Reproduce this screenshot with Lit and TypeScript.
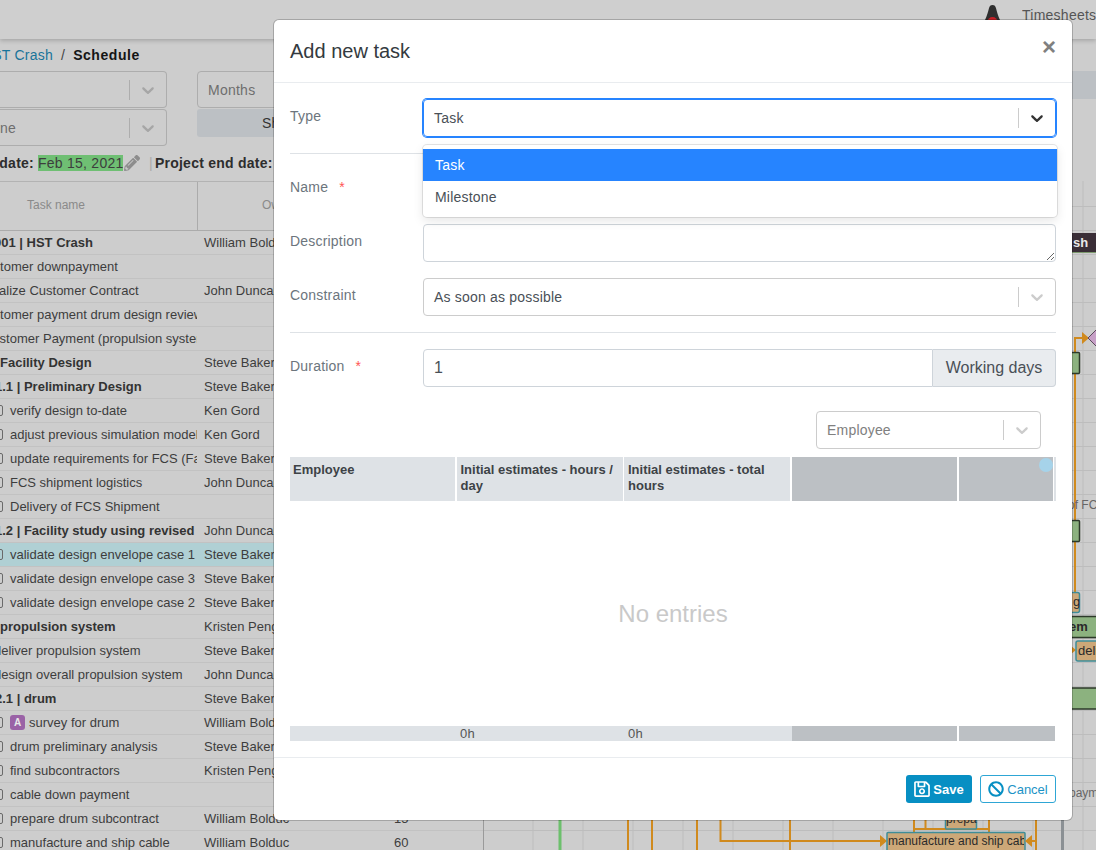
import { LitElement, html, svg, css } from "lit";
import { customElement } from "lit/decorators.js";

interface TaskRow {
  name: string;
  owner?: string;
  x?: number; // left offset of the text, the list is scrolled sideways
  bold?: boolean;
  icon?: boolean;
  badge?: boolean;
  hl?: boolean;
  dur?: string;
}

const ROWS: TaskRow[] = [
  { name: "001 | HST Crash", owner: "William Bolduc", x: -6, bold: true },
  { name: "Customer downpayment", x: -23 },
  { name: "Finalize Customer Contract", owner: "John Duncan", x: -19 },
  { name: "Customer payment drum design review", x: -23 },
  { name: "Customer Payment (propulsion system)", x: -17 },
  { name: "Facility Design", owner: "Steve Baker", x: 0, bold: true },
  { name: "1.1 | Preliminary Design", owner: "Steve Baker", x: -5, bold: true },
  { name: "verify design to-date", owner: "Ken Gord", icon: true },
  { name: "adjust previous simulation model", owner: "Ken Gord", icon: true },
  { name: "update requirements for FCS (Facility)", owner: "Steve Baker", icon: true },
  { name: "FCS shipment logistics", owner: "John Duncan", icon: true },
  { name: "Delivery of FCS Shipment", icon: true },
  { name: "1.2 | Facility study using revised", owner: "John Duncan", x: -5, bold: true },
  { name: "validate design envelope case 1", owner: "Steve Baker", icon: true, hl: true },
  { name: "validate design envelope case 3", owner: "Steve Baker", icon: true },
  { name: "validate design envelope case 2", owner: "Steve Baker", icon: true },
  { name: "propulsion system", owner: "Kristen Peng", x: 0, bold: true },
  { name: "deliver propulsion system", owner: "Steve Baker", x: -6 },
  { name: "design overall propulsion system", owner: "John Duncan", x: -6 },
  { name: "2.1 | drum", owner: "Steve Baker", x: -5, bold: true },
  { name: "survey for drum", owner: "William Bolduc", icon: true, badge: true },
  { name: "drum preliminary analysis", owner: "Steve Baker", icon: true },
  { name: "find subcontractors", owner: "Kristen Peng", icon: true },
  { name: "cable down payment", icon: true },
  { name: "prepare drum subcontract", owner: "William Bolduc", icon: true, dur: "15" },
  { name: "manufacture and ship cable", owner: "William Bolduc", icon: true, dur: "60" },
];

const CHEVRON =
  "M4.516 7.548c0.436-0.446 1.043-0.481 1.576 0l3.908 3.747 3.908-3.747c0.533-0.481 1.141-0.446 1.574 0 0.436 0.445 0.408 1.197 0 1.615-0.406 0.418-4.695 4.502-4.695 4.502-0.217 0.223-0.502 0.335-0.787 0.335s-0.57-0.112-0.789-0.335c0 0-4.287-4.084-4.695-4.502s-0.436-1.17 0-1.615z";
const PENCIL =
  "M497.9 142.1l-46.1 46.1c-4.7 4.7-12.3 4.7-17 0l-111-111c-4.7-4.7-4.7-12.3 0-17l46.1-46.1c18.7-18.7 49.1-18.7 67.9 0l60.1 60.1c18.8 18.7 18.8 49.1 0 67.9zM284.2 99.8L21.6 362.4.4 483.9c-2.9 16.4 11.4 30.6 27.8 27.8l121.5-21.3 262.6-262.6c4.7-4.7 4.7-12.3 0-17l-111-111c-4.8-4.7-12.4-4.7-17.1 0zM124.1 339.9c-5.5-5.5-5.5-14.3 0-19.8l154-154c5.5-5.5 14.3-5.5 19.8 0s5.5 14.3 0 19.8l-154 154c-5.5 5.5-14.3 5.5-19.8 0zM88 424h48v36.3l-64.5 11.3-31.1-31.1L51.7 376H88v48z";
const SAVE =
  "M433.941 129.941l-83.882-83.882A48 48 0 0 0 316.118 32H48C21.49 32 0 53.49 0 80v352c0 26.51 21.49 48 48 48h352c26.51 0 48-21.49 48-48V163.882a48 48 0 0 0-14.059-33.941zM272 80v80H144V80h128zm122 352H54a6 6 0 0 1-6-6V86a6 6 0 0 1 6-6h42v104c0 13.255 10.745 24 24 24h176c13.255 0 24-10.745 24-24V83.882l78.243 78.243a6 6 0 0 1 1.757 4.243V426a6 6 0 0 1-6 6zM224 232c-48.523 0-88 39.477-88 88s39.477 88 88 88 88-39.477 88-88-39.477-88-88-88zm0 128c-22.056 0-40-17.944-40-40s17.944-40 40-40 40 17.944 40 40-17.944 40-40 40z";
const BAN =
  "M256 8C119.034 8 8 119.033 8 256s111.034 248 248 248 248-111.034 248-248S392.967 8 256 8zm130.108 117.892c65.448 65.448 70 165.481 20.677 235.637L150.47 105.216c70.204-49.356 170.226-44.735 235.638 20.676zM125.892 386.108c-65.448-65.448-70-165.481-20.677-235.637L361.53 406.784c-70.203 49.356-170.226 44.736-235.638-20.676z";

function ganttLines() {
  const out = [];
  for (let x = 533; x < 1096; x += 50) {
    out.push(svg`<line class="grid" x1=${x} y1="181" x2=${x} y2="850" />`);
  }
  for (let y = 206; y < 850; y += 24) {
    out.push(svg`<line class="grid" x1="483" y1=${y + 0.5} x2="1096" y2=${y + 0.5} />`);
  }
  return out;
}

@customElement("app-root")
export class AppRoot extends LitElement {
  static styles = css`
    :host {
      display: block;
      font-family: "Liberation Sans", Arial, sans-serif;
      font-size: 14px;
      letter-spacing: 0.25px;
    }
    .page {
      position: relative;
      width: 1096px;
      height: 850px;
      overflow: hidden;
      background: #cdcdcd;
      color: #3d3d3d;
    }
    svg {
      display: block;
    }

    /* page behind the dialog */
    .topbar {
      height: 39px;
      display: flex;
      align-items: flex-start;
      justify-content: flex-end;
      background: #cfcfcf;
      box-shadow: 0 2px 4px rgba(0, 0, 0, 0.18);
    }
    .bell {
      margin: 5px 22px 0 0;
    }
    .timesheets {
      width: 74px;
      overflow: hidden;
      white-space: nowrap;
      line-height: 30px;
      color: #555;
    }
    .crumb {
      display: flex;
      height: 32px;
      align-items: center;
    }
    .clip-left {
      display: flex;
      justify-content: flex-end;
      overflow: hidden;
      white-space: nowrap;
      flex: none;
    }
    .crumb .clip-left {
      width: 53px;
      color: #19749a;
    }
    .crumb .sep {
      margin: 0 8px;
      color: #444;
    }
    .crumb b {
      color: #151515;
      letter-spacing: 0.55px;
    }
    .filters {
      display: flex;
      height: 76px;
      margin-bottom: 8px;
    }
    .f-col {
      width: 167px;
      flex: none;
    }
    .f-col.mid {
      width: 166px;
      margin-left: 30px;
    }
    .f-far {
      width: 100px;
      height: 28px;
      margin-left: auto;
      background: #bcc0c4;
    }
    .sel-bg {
      display: flex;
      align-items: center;
      justify-content: space-between;
      height: 37px;
      margin-bottom: 1px;
      box-sizing: border-box;
      border: 1px solid #adadad;
      border-radius: 4px;
      padding-left: 10px;
      color: #6e6e6e;
    }
    .f-col:first-child .sel-bg {
      border-left: 0;
      border-radius: 0 4px 4px 0;
      padding-left: 0;
    }
    .show-btn {
      height: 28px;
      background: #bcc0c4;
      border-radius: 3px;
      line-height: 28px;
      text-align: center;
      color: #333;
    }
    .ind {
      display: flex;
      align-items: center;
      flex: none;
      width: 37px;
      height: 20px;
      border-left: 1px solid #adadad;
      box-sizing: border-box;
      justify-content: center;
    }
    .ind svg {
      fill: #a6a6a6;
    }
    .dateline {
      display: flex;
      align-items: center;
      height: 16px;
      margin-bottom: 10px;
      white-space: nowrap;
      font-weight: 700;
      color: #2d2d2d;
    }
    .dateline .clip-left {
      width: 34px;
      margin-right: 4px;
    }
    .hl-date {
      width: 85px;
      height: 16px;
      line-height: 16px;
      overflow: hidden;
      background: #6fbf73;
      font-weight: 400;
      color: #3d3d3d;
    }
    .dateline svg {
      margin: 0 9px 0 1px;
      fill: #8d8d8d;
    }
    .dateline .bar {
      font-weight: 400;
      color: #aaa;
      margin-right: 2px;
    }

    .main {
      display: flex;
    }
    .table {
      width: 483px;
      flex: none;
      border-top: 1px solid #b3b3b3;
      box-sizing: border-box;
      font-size: 13px;
      letter-spacing: 0;
    }
    .thead {
      display: flex;
      height: 48px;
      border-bottom: 1px solid #ababab;
      box-sizing: content-box;
      font-size: 12px;
      color: #8a8a8a;
      line-height: 47px;
    }
    .th-task {
      width: 170px;
      padding-left: 27px;
      border-right: 1px solid #ababab;
      flex: none;
    }
    .th-owner {
      padding-left: 64px;
    }
    .row {
      display: flex;
      align-items: center;
      height: 24px;
      box-sizing: border-box;
      border-bottom: 1px solid #c2c2c2;
      white-space: nowrap;
    }
    .row.hl {
      background: #b0d0d4;
    }
    .row.bold .task {
      font-weight: 700;
      color: #333;
    }
    .task {
      display: flex;
      align-items: center;
      width: 197px;
      flex: none;
      overflow: hidden;
    }
    .t-icon {
      flex: none;
      width: 7px;
      height: 11px;
      margin: 0 7px 0 -4px;
      border: 1px solid #6a6a6a;
      border-radius: 2px;
      box-sizing: border-box;
    }
    .badge {
      flex: none;
      width: 15px;
      height: 15px;
      margin-right: 4px;
      border-radius: 3px;
      background: #9a62a6;
      color: #e8e8e8;
      font-size: 10px;
      font-weight: 700;
      line-height: 15px;
      text-align: center;
    }
    .owner {
      width: 190px;
      flex: none;
      padding-left: 7px;
      box-sizing: border-box;
    }
    .dur {
      padding-left: 7px;
    }
    .gantt {
      flex: none;
      width: 613px;
      height: 669px;
    }
    .grid {
      stroke: #bdbdbd;
      stroke-width: 1;
    }
    .dep {
      stroke: #d08a1e;
      stroke-width: 2;
      fill: none;
    }
    .arrow {
      fill: #d08a1e;
    }
    .g-text {
      font-size: 13px;
      letter-spacing: 0;
      fill: #2a2a2a;
    }
    .g-small {
      font-size: 12px;
      letter-spacing: 0;
      fill: #2a2a2a;
    }
    .g-soft {
      font-size: 12px;
      letter-spacing: 0;
      fill: #666;
    }
    .g-white {
      font-size: 13px;
      font-weight: 700;
      letter-spacing: 0;
      fill: #e8e8e8;
    }
    .b-green {
      fill: #8cb27f;
      stroke: #2d3a2a;
      stroke-width: 1.5;
    }
    .b-tan {
      fill: #cda878;
      stroke: #3f8d98;
      stroke-width: 1.5;
    }

    /* dialog */
    .modal {
      position: absolute;
      left: 274px;
      top: 20px;
      width: 798px;
      height: 800px;
      display: flex;
      flex-direction: column;
      background: #fff;
      border-radius: 5px;
      box-shadow: 0 0 0 1px rgba(0, 0, 0, 0.2);
      color: #495057;
      letter-spacing: 0.2px;
    }
    .m-head {
      display: flex;
      align-items: center;
      justify-content: space-between;
      height: 62px;
      flex: none;
      padding: 0 16px;
      border-bottom: 1px solid #e9ecef;
      box-sizing: content-box;
    }
    .m-title {
      font-size: 20px;
      color: #343a40;
      letter-spacing: 0;
    }
    .m-close {
      font-size: 24px;
      font-weight: 700;
      line-height: 1;
      color: #808080;
      margin: -8px 0 0 0;
      letter-spacing: 0;
    }
    .m-body {
      flex: 1;
      display: flex;
      flex-direction: column;
      padding: 16px;
    }
    .f-row {
      position: relative;
      display: flex;
      margin-bottom: 16px;
    }
    .f-label {
      width: 133px;
      flex: none;
      padding-top: 7px;
      line-height: 21px;
      color: #6c757d;
    }
    .req {
      margin-left: 7px;
      color: #f55;
    }
    .f-ctl {
      flex: 1;
      min-width: 0;
      display: flex;
    }
    hr {
      width: 100%;
      height: 1px;
      margin: 0 0 16px;
      border: 0;
      background: #dee2e6;
    }
    .input {
      flex: 1;
      min-width: 0;
      height: 38px;
      box-sizing: border-box;
      border: 1px solid #ced4da;
      border-radius: 4px;
      padding: 6px 10px;
      font: 16px "Liberation Sans", Arial, sans-serif;
      color: #495057;
      background: #fff;
      outline: none;
      resize: vertical;
    }
    .input.join {
      border-radius: 4px 0 0 4px;
    }
    .addon {
      flex: none;
      width: 123px;
      height: 38px;
      box-sizing: border-box;
      border: 1px solid #ced4da;
      border-left: 0;
      border-radius: 0 4px 4px 0;
      background: #e9ecef;
      font-size: 16px;
      line-height: 36px;
      text-align: center;
      letter-spacing: 0;
    }
    .select {
      flex: 1;
      min-width: 0;
      display: flex;
      align-items: center;
      height: 38px;
      box-sizing: border-box;
      border: 1px solid #cccccc;
      border-radius: 4px;
      padding-left: 10px;
      color: #495057;
    }
    .select .val {
      flex: 1;
    }
    .select .ind {
      border-left-color: #cccccc;
      width: 37px;
    }
    .select .ind svg {
      fill: #cccccc;
    }
    .select.focus {
      border-color: #2684ff;
      box-shadow: 0 0 0 1px #2684ff;
    }
    .select.focus .ind svg {
      fill: #333;
    }
    .select.ph .val {
      color: #808080;
    }
    .menu {
      position: absolute;
      left: 133px;
      right: -1px;
      top: 46px;
      z-index: 2;
      padding: 4px 0;
      background: #fff;
      border-radius: 4px;
      box-shadow: 0 0 0 1px rgba(0, 0, 0, 0.1), 0 4px 11px rgba(0, 0, 0, 0.1);
    }
    .opt {
      height: 32px;
      line-height: 32px;
      padding-left: 12px;
    }
    .opt.on {
      background: #2684ff;
      color: #fff;
    }
    .emp-row {
      display: flex;
      justify-content: flex-end;
      margin: 8px 15px 8px 0;
    }
    .emp-row .select {
      flex: none;
      width: 225px;
    }
    .t-head,
    .t-foot {
      display: grid;
    }
    .t-head {
      grid-template-columns: 165px 166px 166px 165.5px 94px 2px;
      column-gap: 1.5px;
      height: 44px;
      flex: none;
    }
    .th {
      position: relative;
      background: #dee2e6;
      padding: 5px 3px 0;
      font-size: 13px;
      font-weight: 700;
      line-height: 16px;
      color: #3d4246;
      letter-spacing: 0;
    }
    .th.n {
      padding-left: 4px;
    }
    .th.dark {
      background: #bcc0c4;
    }
    .th.end {
      padding: 0;
    }
    .dot {
      position: absolute;
      top: 1px;
      right: 0;
      width: 14px;
      height: 14px;
      border-radius: 50%;
      background: #a6d3ea;
    }
    .empty {
      flex: 1;
      display: flex;
      align-items: center;
      justify-content: center;
      font-size: 24px;
      color: #c9c9c9;
      letter-spacing: 0;
    }
    .t-foot {
      grid-template-columns: 166px 168px 167.5px 165.5px 1.5px 96.5px;
      height: 15px;
      flex: none;
      font-size: 13px;
      line-height: 15px;
      letter-spacing: 0.3px;
      color: #555;
    }
    .tf {
      background: #dee2e6;
      padding-left: 4px;
    }
    .tf.dark {
      background: #bcc0c4;
    }
    .tf.gap {
      background: #fff;
      padding: 0;
    }
    .m-foot {
      display: flex;
      justify-content: flex-end;
      gap: 8px;
      flex: none;
      box-sizing: content-box;
      border-top: 1px solid #e9ecef;
      padding: 17px 16px 0 0;
      height: 45px;
    }
    .btn {
      display: flex;
      align-items: center;
      justify-content: center;
      gap: 3px;
      height: 28px;
      box-sizing: border-box;
      border-radius: 3px;
      font-size: 13px;
      letter-spacing: 0;
    }
    .btn.save {
      width: 66px;
      background: #078fc3;
      color: #fff;
      font-weight: 700;
    }
    .btn.save svg {
      fill: #fff;
    }
    .btn.cancel {
      width: 76px;
      border: 1.5px solid #2ea6d5;
      color: #1c93c6;
    }
    .btn.cancel svg {
      fill: #078fc3;
    }
  `;

  private bgSelect(label: string) {
    return html`<div class="sel-bg">
      <span>${label}</span>
      <span class="ind"><svg width="20" height="20" viewBox="0 0 20 20"><path d=${CHEVRON} /></svg></span>
    </div>`;
  }

  private select(label: string, cls = "") {
    return html`<div class="select ${cls}">
      <span class="val">${label}</span>
      <span class="ind"><svg width="20" height="20" viewBox="0 0 20 20"><path d=${CHEVRON} /></svg></span>
    </div>`;
  }

  private taskRow(r: TaskRow) {
    return html`<div class="row ${r.bold ? "bold" : ""} ${r.hl ? "hl" : ""}">
      <div class="task">
        ${r.icon ? html`<span class="t-icon"></span>` : ""}
        ${r.badge ? html`<span class="badge">A</span>` : ""}
        <span style=${r.x ? `margin-left:${r.x}px` : ""}>${r.name}</span>
      </div>
      <div class="owner">${r.owner ?? ""}</div>
      <div class="dur">${r.dur ?? ""}</div>
    </div>`;
  }

  private gantt() {
    return html`<svg class="gantt" viewBox="483 181 613 669" width="613" height="669">
      ${ganttLines()}
      <line x1="483.5" y1="181" x2="483.5" y2="850" stroke="#9a9a9a" />
      <line x1="560" y1="181" x2="560" y2="850" stroke="#6cc06c" stroke-width="3" />
      <line x1="1062.5" y1="700" x2="1062.5" y2="850" stroke="#8b9094" stroke-width="3" />

      <rect x="600" y="233" width="500" height="19" fill="#3a2e37" />
      <line x1="600" y1="252.5" x2="1096" y2="252.5" stroke="#7d9a6e" />
      <text class="g-white" x="1073" y="247">sh</text>

      <path class="dep" d="M1075 610V338H1086" />
      <path class="arrow" d="M1082 332l7 6-7 6z" />
      <path d="M1088 338l9-9 9 9-9 9z" fill="#c7a0c7" stroke="#5c4a5c" />

      <rect class="b-green" x="900" y="352.5" width="179.5" height="21" rx="1" />
      <text class="g-soft" x="1068" y="509">of FC</text>
      <rect class="b-green" x="900" y="520.5" width="179.5" height="21" rx="1" />
      <rect class="b-tan" x="1000" y="592.5" width="79.5" height="20" rx="2" />
      <text class="g-text" x="1073" y="606">g</text>
      <rect class="b-green" x="900" y="616.5" width="220" height="21" />
      <text class="g-text" x="1069" y="631" font-weight="700">em</text>
      <path class="arrow" d="M1071 646l5 4-5 4z" />
      <rect class="b-tan" x="1076" y="641" width="40" height="20" rx="2" />
      <text class="g-text" x="1078" y="655">deli</text>
      <rect class="b-green" x="900" y="688" width="220" height="21" />
      <text class="g-soft" x="1069" y="797">payme</text>

      <path class="dep" d="M628 800V850M652 800V850M697 800V850M790 800V850" />
      <path class="dep" d="M720.5 800V841H881" />
      <path class="arrow" d="M880 835l7 6-7 6z" />
      <path class="dep" d="M914 829H989M914 800V832M925.5 800V829M989 800V832" />
      <rect class="b-tan" x="945.5" y="805" width="31" height="24" rx="1" />
      <text class="g-small" x="946" y="823">prepa</text>
      <rect class="b-tan" x="887" y="832.5" width="138" height="24" rx="1" />
      <svg x="887" y="832" width="137" height="20">
        <text class="g-small" x="1" y="13">manufacture and ship cable</text>
      </svg>
      <path class="dep" d="M1036 800V850M1036 841H1030" />
      <path class="arrow" d="M1032 835l-7 6 7 6z" />
    </svg>`;
  }

  private modal() {
    return html`<div class="modal">
      <div class="m-head">
        <span class="m-title">Add new task</span>
        <span class="m-close">×</span>
      </div>
      <div class="m-body">
        <div class="f-row">
          <div class="f-label">Type</div>
          <div class="f-ctl">${this.select("Task", "focus")}</div>
          <div class="menu">
            <div class="opt on">Task</div>
            <div class="opt">Milestone</div>
          </div>
        </div>
        <hr />
        <div class="f-row">
          <div class="f-label">Name <span class="req">*</span></div>
          <div class="f-ctl"><input class="input" /></div>
        </div>
        <div class="f-row">
          <div class="f-label">Description</div>
          <div class="f-ctl"><textarea class="input"></textarea></div>
        </div>
        <div class="f-row">
          <div class="f-label">Constraint</div>
          <div class="f-ctl">${this.select("As soon as possible")}</div>
        </div>
        <hr />
        <div class="f-row">
          <div class="f-label">Duration <span class="req">*</span></div>
          <div class="f-ctl">
            <input class="input join" value="1" />
            <div class="addon">Working days</div>
          </div>
        </div>
        <div class="emp-row">${this.select("Employee", "ph")}</div>
        <div class="t-head">
          <div class="th">Employee</div>
          <div class="th n">Initial estimates - hours / day</div>
          <div class="th n">Initial estimates - total hours</div>
          <div class="th dark"></div>
          <div class="th dark"><span class="dot"></span></div>
          <div class="th end"></div>
        </div>
        <div class="empty">No entries</div>
        <div class="t-foot">
          <div class="tf"></div>
          <div class="tf">0h</div>
          <div class="tf">0h</div>
          <div class="tf dark"></div>
          <div class="tf gap"></div>
          <div class="tf dark"></div>
        </div>
      </div>
      <div class="m-foot">
        <div class="btn save">
          <svg width="16" height="18" viewBox="0 0 448 512"><path d=${SAVE} /></svg>Save
        </div>
        <div class="btn cancel">
          <svg width="16" height="16" viewBox="0 0 512 512"><path d=${BAN} /></svg>Cancel
        </div>
      </div>
    </div>`;
  }

  render() {
    return html`<div class="page">
      <div class="topbar">
        <svg class="bell" width="15" height="19" viewBox="0 0 15 19">
          <path d="M7.500 0c2 0 3 1 3.600 3.500C12 7 13 11 15 15H0C2 11 3 7 3.900 3.500 4.500 1 5.500 0 7.500 0z" fill="#2f2f2f" />
          <circle cx="7.500" cy="17" r="5" fill="#c42026" />
        </svg>
        <div class="timesheets">Timesheets</div>
      </div>
      <div class="crumb">
        <div class="clip-left">HST Crash</div>
        <span class="sep">/</span><b>Schedule</b>
      </div>
      <div class="filters">
        <div class="f-col">${this.bgSelect("")}${this.bgSelect("ne")}</div>
        <div class="f-col mid">
          ${this.bgSelect("Months")}
          <div class="show-btn">Show</div>
        </div>
        <div class="f-far"></div>
      </div>
      <div class="dateline">
        <div class="clip-left">Start date:</div>
        <span class="hl-date">Feb 15, 2021</span>
        <svg width="16" height="16" viewBox="0 0 512 512"><path d=${PENCIL} /></svg>
        <span class="bar">|</span>Project end date:
      </div>
      <div class="main">
        <div class="table">
          <div class="thead">
            <div class="th-task">Task name</div>
            <div class="th-owner">Owner</div>
          </div>
          ${ROWS.map((r) => this.taskRow(r))}
        </div>
        ${this.gantt()}
      </div>
      ${this.modal()}
    </div>`;
  }
}

declare global {
  interface HTMLElementTagNameMap {
    "app-root": AppRoot;
  }
}
